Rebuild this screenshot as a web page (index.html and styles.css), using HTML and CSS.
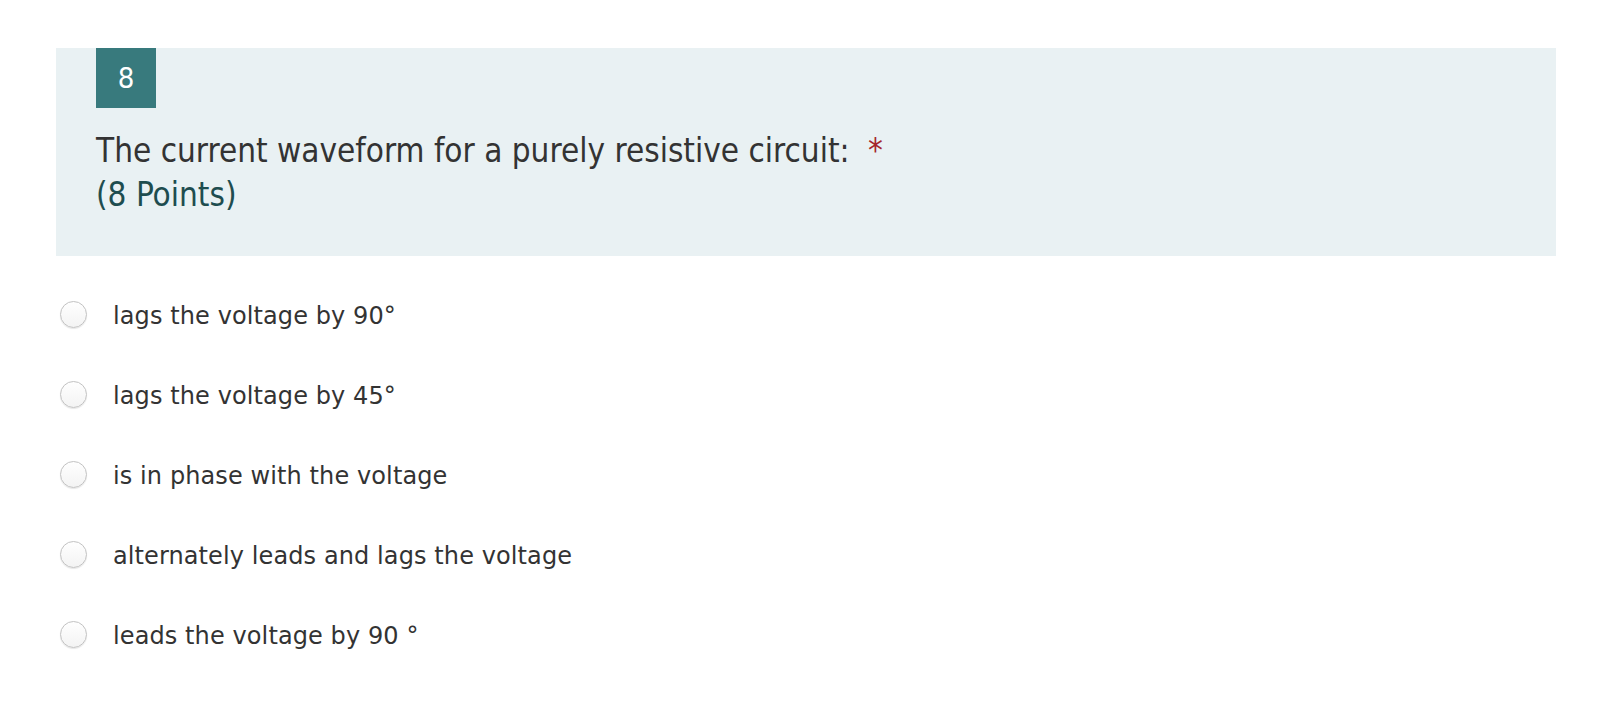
FILE: index.html
```html
<!DOCTYPE html>
<html>
<head>
<meta charset="utf-8">
<link rel="stylesheet" href="styles.css">
</head>
<body>
<div class="question">
  <div class="header">
    <div class="badge">8</div>
    <div class="title">The current waveform for a purely resistive circuit: <span class="req">*</span></div>
    <div class="points">(8 Points)</div>
  </div>
  <div class="options">
    <label class="option"><span class="radio"></span><span class="label">lags the voltage by 90°</span></label>
    <label class="option"><span class="radio"></span><span class="label">lags the voltage by 45°</span></label>
    <label class="option"><span class="radio"></span><span class="label">is in phase with the voltage</span></label>
    <label class="option"><span class="radio"></span><span class="label">alternately leads and lags the voltage</span></label>
    <label class="option"><span class="radio"></span><span class="label">leads the voltage by 90 °</span></label>
  </div>
</div>
</body>
</html>
```
FILE: styles.css
```css
html, body {
  margin: 0;
  padding: 0;
  background: #ffffff;
}
body {
  font-family: "DejaVu Sans Condensed", "DejaVu Sans", sans-serif;
  color: #333333;
}
.question {
  padding: 48px 48px 0 56px;
}
.header {
  width: 1500px;
  box-sizing: border-box;
  height: 208px;
  background: #e9f1f3;
  padding: 0 40px;
}
.badge {
  width: 60px;
  height: 60px;
  background: #387a7d;
  color: #ffffff;
  font-size: 29px;
  line-height: 60px;
  text-align: center;
}
.title {
  margin-top: 21px;
  font-size: 33px;
  line-height: 44px;
  color: #333333;
}
.req {
  color: #a4262c;
  margin-left: 9px;
}
.points {
  font-size: 33px;
  line-height: 44px;
  color: #1e4d4f;
}
.options {
  display: flex;
  flex-direction: column;
  padding-top: 18px;
}
.option {
  display: flex;
  align-items: center;
  height: 80px;
  padding-left: 4px;
}
.radio {
  width: 25px;
  height: 25px;
  border-radius: 50%;
  border: 1px solid #c2c2c2;
  background: linear-gradient(#ffffff, #f3f3f3);
  box-shadow: 0 1px 1px rgba(0,0,0,0.1);
  flex: none;
}
.label {
  margin-left: 26px;
  margin-top: 4px;
  font-family: "DejaVu Sans", sans-serif;
  font-size: 24px;
  letter-spacing: 0.1px;
  color: #333333;
}
```
